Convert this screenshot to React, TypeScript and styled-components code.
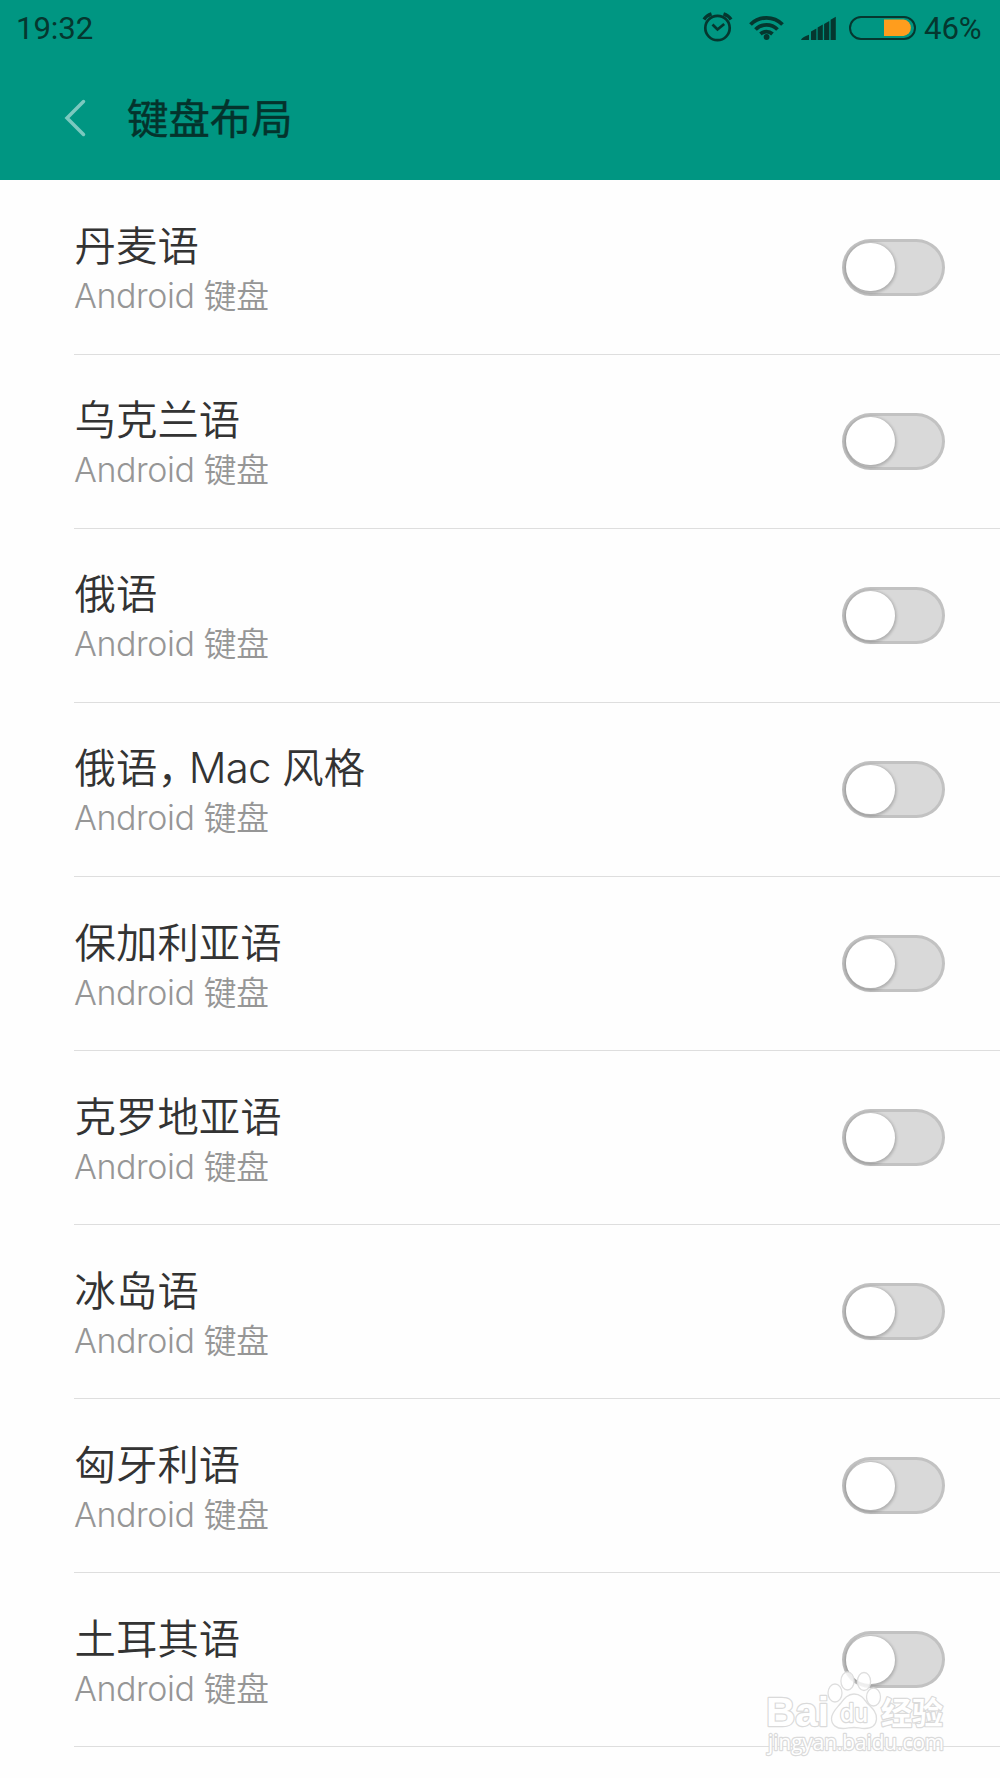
import React, { useState } from "react";
import styled, { createGlobalStyle } from "styled-components";

const GlobalStyle = createGlobalStyle`
  body { margin: 0; background: #fefefe; }
  * { box-sizing: border-box; }
`;

const Screen = styled.div`
  position: relative;
  width: 1000px;
  height: 1778px;
  overflow: hidden;
  background: #fefefe;
  font-family: Inter, "Noto Sans CJK SC", sans-serif;
`;

const Header = styled.header`
  height: 180.4px;
  background: #009682;
`;

const StatusBar = styled.div`
  height: 57px;
  display: flex;
  align-items: center;
  justify-content: space-between;
  padding: 0 12px 0 16px;
  color: #05372f;
`;

const StatusText = styled.span<{ $width: number }>`
  display: block;
  width: ${(p) => p.$width}px;
  font-family: Roboto, sans-serif;
  font-size: 31.2px;
  line-height: 59px;
  letter-spacing: -0.1px;
  white-space: nowrap;
`;

const StatusIcons = styled.div`
  display: flex;
  align-items: center;
  height: 57px;
`;

const TitleBar = styled.div`
  height: 123px;
  display: flex;
  align-items: center;
  padding-left: 60px;
`;

const BackButton = styled.button`
  display: flex;
  width: 67px;
  padding: 0;
  margin-top: -2px;
  border: 0;
  background: none;
`;

const PageTitle = styled.h1`
  margin: 0;
  font-size: 41.4px;
  font-weight: 400;
  line-height: 60px;
  color: #04332c;
  -webkit-text-stroke: 0.4px #04332c;
`;

const List = styled.ul`
  margin: 0;
  padding: 0.2px 0 0 74px;
  list-style: none;
`;

const Row = styled.li`
  height: 174.1px;
  display: flex;
  align-items: center;
  justify-content: space-between;
  padding: 0 55px 0 0;
  border-bottom: 1px solid #dedede;
`;

const Labels = styled.div`
  display: flex;
  flex-direction: column;
  padding-top: 8px;
`;

const Name = styled.span`
  height: 50px;
  padding-left: 0.6px;
  font-size: 41.4px;
  font-weight: 350;
  line-height: 50px;
  color: #333;
  white-space: nowrap;
`;

const Summary = styled.span`
  height: 50px;
  font-size: 32.7px;
  font-weight: 350;
  line-height: 50px;
  color: #969696;
  white-space: nowrap;
`;

const Comma = styled.span`
  font-family: "Noto Sans CJK SC", sans-serif;
  font-feature-settings: "halt" 1;
  line-height: 0;
  margin-right: 10.6px;
`;

const Latin = styled.span<{ $size: number; $spacing: number }>`
  font-family: Inter, sans-serif;
  font-weight: 350;
  font-size: ${(p) => p.$size}px;
  letter-spacing: ${(p) => p.$spacing}px;
`;

const Track = styled.button<{ $on: boolean }>`
  display: flex;
  justify-content: ${(p) => (p.$on ? "flex-end" : "flex-start")};
  align-items: center;
  width: 103px;
  height: 57px;
  margin: 0;
  padding: 0;
  border: 3px solid #c2c2c2;
  border-left-width: 4px;
  border-radius: 29px;
  background: ${(p) => (p.$on ? "#009682" : "#d9d9d9")};
`;

const Knob = styled.span`
  width: 48.5px;
  height: 48.5px;
  border-radius: 50%;
  background: #fff;
  box-shadow: 0 1px 3px 1.5px rgba(0, 0, 0, 0.2);
`;

const Watermark = styled.svg`
  position: absolute;
  left: 760px;
  top: 1666px;
`;

type Language = { name: string; latin?: string; rest?: string };

const languages: Language[] = [
  { name: "丹麦语" },
  { name: "乌克兰语" },
  { name: "俄语" },
  { name: "俄语", latin: "Mac", rest: "风格" },
  { name: "保加利亚语" },
  { name: "克罗地亚语" },
  { name: "冰岛语" },
  { name: "匈牙利语" },
  { name: "土耳其语" },
];

function LanguageRow({ item }: { item: Language }) {
  const [on, setOn] = useState(false);
  return (
    <Row>
      <Labels>
        <Name>
          {item.name}
          {item.latin && (
            <>
              <Comma>，</Comma><Latin $size={42} $spacing={-0.8}>{item.latin}</Latin> {item.rest}
            </>
          )}
        </Name>
        <Summary>
          <Latin $size={34} $spacing={-0.45}>Android</Latin> 键盘
        </Summary>
      </Labels>
      <Track $on={on} role="switch" aria-checked={on} onClick={() => setOn(!on)}>
        <Knob />
      </Track>
    </Row>
  );
}

function StatusGlyphs() {
  return (
    <svg width="224" height="57" viewBox="700 0 224 57" fill="none" stroke="#05372f">
      <circle cx="717.5" cy="28" r="12.2" strokeWidth="2.7" />
      <path d="M712.500 24.500l5 5 6.700-5.500" strokeWidth="2.700" />
      <path d="M704 19.500q2.500-4 7.500-5.700M731 19.500q-2.500-4-7.500-5.700" strokeWidth="3.400" />
      <path d="M750.500 24.500a22.500 22.500 0 0 1 32 0M755.500 29.500a15.500 15.500 0 0 1 22 0M760.500 34a8.700 8.700 0 0 1 12 0" strokeWidth="3.800" />
      <circle cx="766.600" cy="37" r="2.900" fill="#05372f" stroke="none" />
      <path d="M801 40q1-3 8-5.300V40zM811 31.500l5.400-3V40H811zM817.600 27.500l5.200-3V40h-5.200zM824.100 24l5.200-3V40h-5.200zM830.600 19.800l5.200-3V40h-5.200z" fill="#05372f" stroke="none" />
      <rect x="850" y="17" width="65" height="22" rx="11" strokeWidth="2" />
      <path d="M884 19.500h19.500a8.300 8.300 0 0 1 0 16.500H884z" fill="#ff9d1d" stroke="none" />
    </svg>
  );
}

function BaiduMark() {
  return (
    <Watermark width="200" height="100" viewBox="760 1666 200 100" aria-label="Baidu 经验">
      <g fill="#fff" fillOpacity=".8" stroke="#dedede" strokeWidth="1.300">
        <ellipse cx="847.500" cy="1681" rx="6.600" ry="9" />
        <ellipse cx="864" cy="1681.500" rx="6.600" ry="9" />
        <ellipse cx="835" cy="1693" rx="7" ry="9" />
        <ellipse cx="873.500" cy="1697" rx="7" ry="9" />
        <path d="M854 1694c7 0 10 5 13 9 5 5 10 9 9.500 16-.5 7-6 9.500-12 9.500-4 0-7-1-10.500-1s-7 1-11 1c-6 0-11.500-3-11.500-10 0-6 5-10 9-15 3.500-4.500 7-9.500 13.500-9.500z" />
      </g>
      <g fill="#fff" stroke="#dadada" strokeWidth="2.400" strokeLinejoin="round" paintOrder="stroke" fontFamily='"Liberation Sans", "Noto Sans CJK SC", sans-serif' fontWeight="700">
        <text x="766" y="1726" fontSize="40" textLength="63" lengthAdjust="spacingAndGlyphs">Bai</text>
        <text x="840" y="1721.500" fontFamily="Inter, sans-serif" fontSize="25" fontWeight="500" textLength="28" lengthAdjust="spacingAndGlyphs">du</text>
        <text x="881" y="1724" fontSize="31" textLength="62" lengthAdjust="spacingAndGlyphs">经验</text>
        <text x="768" y="1750" fontFamily='"Open Sans", sans-serif' fontSize="21" fontWeight="500" textLength="176" lengthAdjust="spacingAndGlyphs">jingyan.baidu.com</text>
      </g>
    </Watermark>
  );
}

export default function App() {
  return (
    <Screen>
      <GlobalStyle />
      <Header>
        <StatusBar>
          <StatusText $width={78}>19:32</StatusText>
          <StatusIcons>
            <StatusGlyphs />
            <StatusText $width={64}>46%</StatusText>
          </StatusIcons>
        </StatusBar>
        <TitleBar>
          <BackButton aria-label="返回">
            <svg width="30" height="40" viewBox="0 0 30 40" fill="none" stroke="#7bc9bf" strokeWidth="3.500" strokeLinecap="round">
              <path d="M23.500 3.500L7 20l16.500 16.500" />
            </svg>
          </BackButton>
          <PageTitle>键盘布局</PageTitle>
        </TitleBar>
      </Header>
      <List>
        {languages.map((item) => (
          <LanguageRow key={item.name + (item.latin ?? "")} item={item} />
        ))}
      </List>
      <BaiduMark />
    </Screen>
  );
}
